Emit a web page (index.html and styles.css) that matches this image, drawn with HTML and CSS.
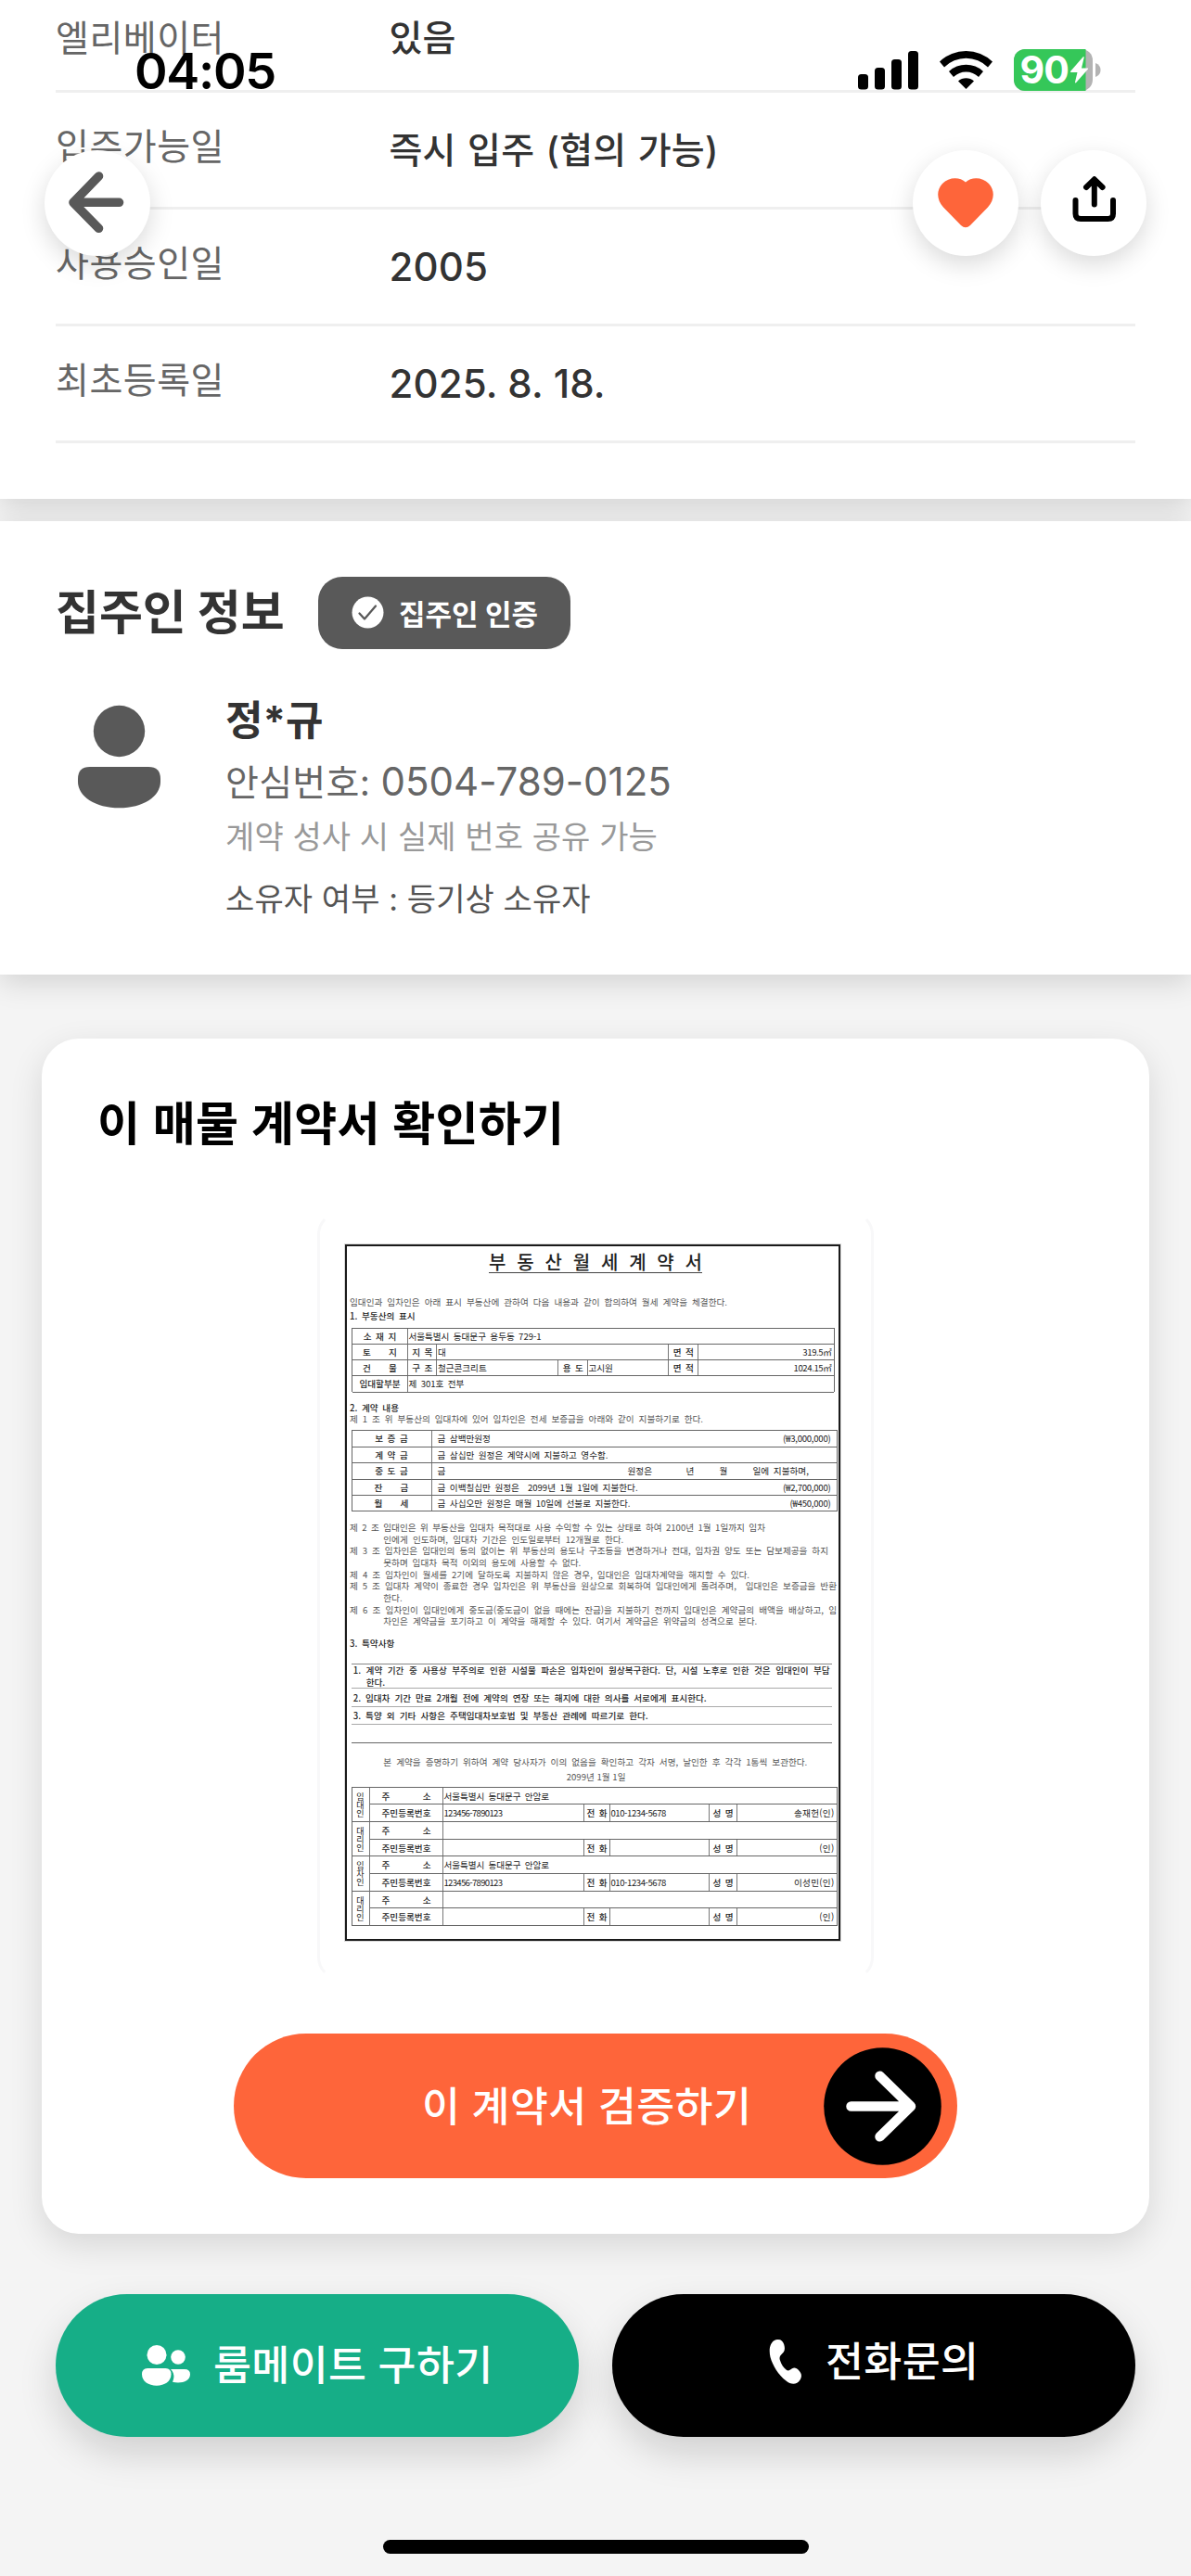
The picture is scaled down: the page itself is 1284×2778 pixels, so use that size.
FILE: index.html
```html
<!DOCTYPE html>
<html lang="ko">
<head>
<meta charset="utf-8">
<title>매물 상세</title>
<link rel="stylesheet" href="styles.css">
</head>
<body>
<div class="screen">
  <div class="status">
    <span class="time">04:05</span>
    <svg class="status-icons" width="264" height="48" viewBox="924 52 264 48">
      <g fill="#000">
        <rect x="925" y="80" width="11" height="16.500" rx="3.500"/>
        <rect x="943" y="73" width="11" height="23.500" rx="3.500"/>
        <rect x="961" y="64" width="11" height="32.500" rx="3.500"/>
        <rect x="979" y="55" width="11" height="41.500" rx="3.500"/>
        <path d="M1013 66.500a41 41 0 0 1 57 0l-5 6a33.500 33.500 0 0 0-47 0z"/>
        <path d="M1023 77a27 27 0 0 1 37 0l-5 6a19.500 19.500 0 0 0-27 0z"/>
        <path d="M1033 87.500a13 13 0 0 1 17 0l-8.500 8.500z"/>
      </g>
      <path d="M1105 53h61a12 12 0 0 1 12 12v21a12 12 0 0 1-12 12h-61a12 12 0 0 1-12-12v-21a12 12 0 0 1 12-12z" fill="#b3b3b3"/>
      <path d="M1105 53h65.500v45h-65.500a12 12 0 0 1-12-12v-21a12 12 0 0 1 12-12z" fill="#35c759"/>
      <path d="M1181 68q5.500 2 5.500 7.500t-5.500 7.500z" fill="#b3b3b3"/>
      <path d="M1167.500 61.500l-13.500 15.500q-.5 1 1 1h6.500l-2.500 10.500q0 1.500 1.200.5l12.800-14.500q.8-1-.6-1h-6.400l2.700-11.500q0-1.500-1.200-.5z" fill="#fff"/>
      <text class="battery-text" x="1099.500" y="90">90</text>
    </svg>
  </div>

  <button class="round back" aria-label="뒤로">
    <svg width="114" height="114" viewBox="48 162 114 114" fill="none" stroke="#595959" stroke-width="9.600" stroke-linecap="round" stroke-linejoin="round"><path d="M128.500 218.300H79M106.500 190L79 218.300l27.500 28"/></svg>
  </button>
  <div class="round-group">
    <button class="round" aria-label="찜">
      <svg width="114" height="114" viewBox="984 162 114 114"><path d="M1041 196.500C1047 190.500 1059 190.500 1066 198C1073 205.500 1072 216 1065 223.500L1046 243Q1041 247.500 1036 243L1017 223.500C1010 216 1009 205.500 1016 198C1023 190.500 1035 190.500 1041 196.500Z" fill="#fe653a"/></svg>
    </button>
    <button class="round" aria-label="공유">
      <svg width="114" height="114" viewBox="1122 162 114 114" fill="none" stroke="#000" stroke-width="6" stroke-linecap="round" stroke-linejoin="round"><path d="M1179.800 220.500V194M1171 202l8.800-8.700 8.800 8.700M1159.500 216v14.500q0 5.500 5.500 5.500h29.500q5.500 0 5.500-5.500V216"/></svg>
    </button>
  </div>

  <section class="panel facts">
    <div class="fact fact-first"><span class="key">엘리베이터</span><span class="val">있음</span></div>
    <div class="fact"><span class="key">입주가능일</span><span class="val">즉시 입주 (협의 가능)</span></div>
    <div class="fact"><span class="key">사용승인일</span><span class="val num">2005</span></div>
    <div class="fact"><span class="key">최초등록일</span><span class="val num">2025. 8. 18.</span></div>
  </section>

  <section class="panel owner">
    <div class="owner-head">
      <h2>집주인 정보</h2>
      <span class="badge">
        <svg width="35" height="35" viewBox="0 0 35 35"><circle cx="17.500" cy="17.500" r="17" fill="#fff"/><path d="M8.500 18.500l5.500 6 12-14" fill="none" stroke="#595959" stroke-width="2.300" stroke-linecap="round" stroke-linejoin="round"/></svg>
        <span>집주인 인증</span>
      </span>
    </div>
    <div class="owner-body">
      <svg width="183" height="130" viewBox="60 743 183 130" fill="#595959"><circle cx="128.500" cy="788.500" r="27.700"/><path d="M84 840q0-13 13-13h63q13 0 13 13v3c0 16-19 28.300-44.500 28.300S84 859 84 843z"/></svg>
      <div class="owner-lines">
        <div class="name">정*규</div>
        <div class="phone">안심번호: <span class="digits">0504-789-0125</span></div>
        <div class="note">계약 성사 시 실제 번호 공유 가능</div>
        <div class="relation">소유자 여부 : 등기상 소유자</div>
      </div>
    </div>
  </section>

  <section class="card">
    <h2>이 매물 계약서 확인하기</h2>
    <div class="paper">
      <div class="doc">
        <div class="doc-title">부 동 산 월 세 계 약 서</div>
        <p class="ln intro">임대인과 임차인은 아래 표시 부동산에 관하여 다음 내용과 같이 합의하여 월세 계약을 체결한다.</p>
        <p class="ln strong">1. 부동산의 표시</p>

        <div class="grid t1">
          <div class="tr"><b class="c1">소 재 지</b><span>서울특별시 동대문구 용두동 729-1</span></div>
          <div class="tr"><b class="c1">토&emsp;&emsp;지</b><b class="c2">지 목</b><span>대</span><b class="c2">면 적</b><span class="area">319.5㎡</span></div>
          <div class="tr"><b class="c1">건&emsp;&emsp;물</b><b class="c2">구 조</b><span class="struct">철근콘크리트</span><b class="c2">용 도</b><span>고시원</span><b class="c2">면 적</b><span class="area">1024.15㎡</span></div>
          <div class="tr"><b class="c1">임대할부분</b><span>제 301호 전부</span></div>
        </div>

        <p class="ln strong head2">2. 계약 내용</p>
        <p class="ln art1">제 1 조 위 부동산의 임대차에 있어 임차인은 전세 보증금을 아래와 같이 지불하기로 한다.</p>

        <div class="grid t2">
          <div class="tr"><b>보 증 금</b><span>금 삼백만원정</span><em>(₩3,000,000)</em></div>
          <div class="tr"><b>계 약 금</b><span>금 삼십만 원정은 계약시에 지불하고 영수함.</span></div>
          <div class="tr"><b>중 도 금</b><span class="blank"><i>금</i><i>원정은</i><i>년</i><i>월</i><i>일에 지불하며,</i></span></div>
          <div class="tr"><b>잔&emsp;&emsp;금</b><span>금 이백칠십만 원정은 &nbsp;2099년 1월 1일에 지불한다.</span><em>(₩2,700,000)</em></div>
          <div class="tr"><b>월&emsp;&emsp;세</b><span>금 사십오만 원정은 매월 10일에 선불로 지불한다.</span><em>(₩450,000)</em></div>
        </div>

        <div class="articles">
          <p class="ln a1">제 2 조 임대인은 위 부동산을 임대차 목적대로 사용 수익할 수 있는 상태로 하여 2100년 1월 1일까지 임차</p>
          <p class="ln sub a2">인에게 인도하며, 임대차 기간은 인도일로부터 12개월로 한다.</p>
          <p class="ln a3">제 3 조 임차인은 임대인의 동의 없이는 위 부동산의 용도나 구조등을 변경하거나 전대, 임차권 양도 또는 담보제공을 하지</p>
          <p class="ln sub a4">못하며 임대차 목적 이외의 용도에 사용할 수 없다.</p>
          <p class="ln a5">제 4 조 임차인이 월세를 2기에 달하도록 지불하지 않은 경우, 임대인은 임대차계약을 해지할 수 있다.</p>
          <p class="ln a6">제 5 조 임대차 계약이 종료한 경우 임차인은 위 부동산을 원상으로 회복하여 임대인에게 돌려주며, &nbsp;임대인은 보증금을 반환</p>
          <p class="ln sub a7">한다.</p>
          <p class="ln a6">제 6 조 임차인이 임대인에게 중도금(중도금이 없을 때에는 잔금)을 지불하기 전까지 임대인은 계약금의 배액을 배상하고, 임</p>
          <p class="ln sub a9">차인은 계약금을 포기하고 이 계약을 해제할 수 있다. 여기서 계약금은 위약금의 성격으로 본다.</p>
        </div>

        <p class="ln strong head3">3. 특약사항</p>
        <div class="terms">
          <div class="two"><p class="ln s1">1. 계약 기간 중 사용상 부주의로 인한 시설물 파손은 임차인이 원상복구한다. 단, 시설 노후로 인한 것은 임대인이 부담</p><p class="ln s1b">한다.</p></div>
          <div><p class="ln s2">2. 임대차 기간 만료 2개월 전에 계약의 연장 또는 해지에 대한 의사를 서로에게 표시한다.</p></div>
          <div><p class="ln s3">3. 특양 외 기타 사항은 주택임대차보호법 및 부동산 관례에 따르기로 한다.</p></div>
          <div></div>
        </div>

        <p class="ln closing">본 계약을 증명하기 위하여 계약 당사자가 이의 없음을 확인하고 각자 서명, 날인한 후 각각 1통씩 보관한다.</p>
        <p class="ln date">2099년 1월 1일</p>

        <div class="grid t3">
          <div class="party"><div class="role">임<br>대<br>인</div><div class="rows">
            <div class="tr"><b><u>주 소</u></b><span>서울특별시 동대문구 안암로</span></div>
            <div class="tr"><b><u>주민등록번호</u></b><span class="rid">123456-7890123</span><b class="tel">전 화</b><span class="telv">010-1234-5678</span><b class="nm">성 명</b><em>송재헌(인)</em></div>
          </div></div>
          <div class="party"><div class="role">대<br>리<br>인</div><div class="rows">
            <div class="tr"><b><u>주 소</u></b><span></span></div>
            <div class="tr"><b><u>주민등록번호</u></b><span class="rid"></span><b class="tel">전 화</b><span class="telv"></span><b class="nm">성 명</b><em>(인)</em></div>
          </div></div>
          <div class="party"><div class="role">임<br>차<br>인</div><div class="rows">
            <div class="tr"><b><u>주 소</u></b><span>서울특별시 동대문구 안암로</span></div>
            <div class="tr"><b><u>주민등록번호</u></b><span class="rid">123456-7890123</span><b class="tel">전 화</b><span class="telv">010-1234-5678</span><b class="nm">성 명</b><em>이성민(인)</em></div>
          </div></div>
          <div class="party"><div class="role">대<br>리<br>인</div><div class="rows">
            <div class="tr"><b><u>주 소</u></b><span></span></div>
            <div class="tr"><b><u>주민등록번호</u></b><span class="rid"></span><b class="tel">전 화</b><span class="telv"></span><b class="nm">성 명</b><em>(인)</em></div>
          </div></div>
        </div>
      </div>
    </div>
    <button class="verify">
      <span>이 계약서 검증하기</span>
      <svg width="127" height="127" viewBox="888.500 2206.800 127 127"><circle cx="952" cy="2270.300" r="63.300" fill="#000"/><path d="M918 2270.300h63.500M949 2237.500l33.500 32.800-33.500 32.800" fill="none" stroke="#fff" stroke-width="10.500" stroke-linecap="round" stroke-linejoin="round"/></svg>
    </button>
  </section>

  <div class="actions">
    <button class="mate">
      <svg width="54" height="46" viewBox="152 2528 54 46" fill="#fff"><circle cx="169" cy="2539.500" r="10.500"/><circle cx="192" cy="2542" r="7.800"/><path d="M153 2560.500q0-6.500 6-6.500h19.500q6 0 6 6.500c0 7.500-7 12.200-15.700 12.200S153 2568 153 2560.500z"/><path d="M184 2555h15q6 0 6 5.500c0 6-6 9-13 9q-3 0-6-.8 2.300-5 .8-9.500-.8-2.500-2.800-4.200z"/></svg>
      <span>룸메이트 구하기</span>
    </button>
    <button class="call">
      <svg width="36" height="50" viewBox="829 2521 36 50"><path d="M836.500 2522.300C841 2521 844 2523 845.300 2527.500C846.800 2533 845.500 2535.500 842.500 2538C840.500 2540 840 2541.500 841 2544.500C842.300 2549 844.500 2552 847.500 2554.500C850 2556.500 851.300 2555 853.500 2553.500C856 2552 858 2552.300 860 2554C865 2558.500 864.500 2562 862.500 2565.500C859 2571 853 2571 847.500 2566.500C839 2560 833 2550 830.500 2541C828.800 2534 829.500 2524.500 836.500 2522.300Z" fill="#fff"/></svg>
      <span>전화문의</span>
    </button>
  </div>
  <div class="home-bar"></div>
</div>
</body>
</html>
```

FILE: styles.css
```css
* { box-sizing: border-box; }
body { margin: 0; background: #f4f4f4; }
h2, p { margin: 0; }
button { border: 0; padding: 0; font: inherit; color: inherit; }
svg { display: block; flex: none; }

.screen {
  position: relative;
  width: 1284px;
  height: 2778px;
  overflow: hidden;
  background: #f4f4f4;
  font-family: "Inter", "Noto Sans CJK KR", sans-serif;
  color: #333;
}

/* status bar and floating buttons lie over the scrolled page */
.status {
  position: absolute;
  z-index: 3;
  top: 52px;
  left: 145px;
  width: 1043px;
  display: flex;
  justify-content: space-between;
  align-items: flex-start;
}
.status-icons { overflow: visible; }
.time { font-size: 54px; font-weight: 600; line-height: 50px; color: #000; letter-spacing: -1.3px; }
.battery-text { font-size: 41px; font-weight: 700; fill: #fff; letter-spacing: -1px; }

.round {
  width: 114px;
  height: 114px;
  border-radius: 50%;
  background: #fff;
  box-shadow: 0 9px 27px rgba(0, 0, 0, .15);
}
.back { position: absolute; z-index: 2; top: 162px; left: 48px; }
.round-group { position: absolute; z-index: 2; top: 162px; left: 984px; display: flex; gap: 24px; }

.panel { background: #fff; padding: 0 60px; box-shadow: 0 8px 30px rgba(0, 0, 0, .14); }

.facts { height: 538px; }
.fact {
  height: 126px;
  border-bottom: 3px solid #efefef;
  display: flex;
  align-items: center;
}
.key { width: 359.500px; padding-bottom: 8px; font-size: 39px; line-height: 60px; color: #666; letter-spacing: .5px; }
.val { font-size: 39px; font-weight: 500; line-height: 60px; color: #333; letter-spacing: .2px; word-spacing: 1.800px; }
.num { font-size: 42px; letter-spacing: .1px; word-spacing: 0; }
.fact-first { height: 100px; align-items: flex-start; }
.fact-first .key, .fact-first .val { line-height: 82px; padding: 0; }

.owner { margin-top: 24px; height: 489px; padding-top: 60px; }
.owner-head { display: flex; align-items: center; gap: 36px; height: 78px; }
.owner-head h2 { font-size: 51px; font-weight: 700; line-height: 78px; width: 247px; white-space: nowrap; }
.badge {
  display: flex;
  align-items: center;
  gap: 16px;
  width: 272px;
  height: 78px;
  padding: 0 0 2px 36px;
  border-radius: 26px;
  background: #595959;
  color: #fff;
  font-size: 31px;
  font-weight: 700;
  white-space: nowrap;
}
.owner-body { display: flex; margin-top: 43px; }
.name { font-size: 44px; font-weight: 700; line-height: 68px; margin-bottom: -2px; }
.phone { font-size: 39px; line-height: 67px; margin-bottom: -1px; color: #666; letter-spacing: .3px; }
.digits { font-size: 42px; letter-spacing: 0; }
.note { font-size: 34px; line-height: 54px; color: #999; letter-spacing: .1px; }
.relation { margin-top: 13px; font-size: 34px; line-height: 54px; color: #555; letter-spacing: .1px; }

.card {
  margin: 69px 45px 0;
  height: 1289px;
  padding-top: 56px;
  border-radius: 40px;
  background: #fff;
  box-shadow: 0 12px 36px rgba(0, 0, 0, .12);
  color: #000;
}
.card h2 { margin-left: 60px; font-size: 50px; font-weight: 700; line-height: 72px; letter-spacing: .25px; word-spacing: 1.500px; }

.paper {
  width: 600px;
  height: 828px;
  margin: 59px auto 0;
  padding: 35px 33px 0 27px;
  border: 3px solid #f8f8f9;
  border-top-color: #fff;
  border-bottom-color: #fff;
  border-radius: 24px;
}
.doc {
  width: 534px;
  height: 751px;
  margin-top: -3px;
  border: 2px solid #1a1a1a;
  outline: 1px solid rgba(0, 0, 0, .15);
  padding: 7px 0 0 3px;
  font-family: "Noto Sans CJK KR", sans-serif;
  font-size: 9.6px;
  color: #444;
}
.doc-title {
  width: 230px;
  height: 22px;
  margin-left: 150px;
  border-bottom: 1px solid #444;
  font-size: 20px;
  line-height: 19px;
  font-weight: 500;
  color: #222;
  text-align-last: justify;
  white-space: nowrap;
}
.ln { height: 12.67px; line-height: 12px; white-space: nowrap; text-align-last: justify; color: #555; }
.strong { font-weight: 500; color: #222; text-align-last: left; word-spacing: 2px; }
.intro { width: 407px; margin-top: 24.700px; margin-bottom: 2.300px; }

.grid { margin-left: 1.500px; border: 1px solid #666; border-bottom: 0; color: #222; }
.tr { display: flex; border-bottom: 1px solid #666; white-space: nowrap; word-spacing: 1.800px; }
.tr > * { display: flex; align-items: center; line-height: 12px; }
.tr b { justify-content: center; font-weight: 500; }
.tr em { font-style: normal; margin-left: auto; letter-spacing: 0; }
.t1 { width: 521px; height: 69.500px; margin-top: 6.500px; }
.t1 .tr { height: 17.200px; }
.t1 .tr > * { border-right: 1px solid #777; padding-left: 1px; }
.t1 .tr > span:last-child { border-right: 0; }
.t1 .tr span { flex: 1; letter-spacing: -.05px; }
.t1 .c1 { width: 60px; }
.t1 .c2 { width: 31.500px; }
.t1 .tr .struct { flex: none; width: 131px; }
.t1 .tr .area { flex: none; width: 146px; justify-content: flex-end; padding-right: 2px; letter-spacing: -.4px; }

.head2 { margin-top: 10.500px; height: 12px; }
.art1 { width: 381px; }
.t2 { width: 524px; margin-top: 5.800px; }
.t2 .tr { height: 17.450px; }
.t2 b { width: 86px; border-right: 1px solid #777; margin-right: 6px; }
.t2 em { padding-right: 6px; letter-spacing: -.25px; }
.t2 .blank { flex: 1; word-spacing: 2px; }
.t2 i { font-style: normal; }
.t2 i:nth-child(1) { width: 205px; }
.t2 i:nth-child(2) { width: 63px; }
.t2 i:nth-child(3) { width: 36px; }
.t2 i:nth-child(4) { width: 36px; }

.articles { margin-top: 10.700px; }
.sub { margin-left: 36.300px; }
.a1 { width: 448px; }
.a2 { width: 259px; }
.a3 { width: 516px; }
.a4 { width: 213px; }
.a5 { width: 431px; }
.a6 { width: 525px; }
.a7 { width: 22px; }
.a9 { width: 403px; }

.head3 { margin-top: 11.300px; }
.terms { width: 518px; margin: 15px 0 0 2px; border-top: 1px solid #888; }
.terms > div { height: 19.670px; border-bottom: 1px solid #aaa; padding: 3.700px 0 0 1.700px; }
.terms > div:last-child { border-bottom-color: #666; }
.terms > .two { height: 26px; padding-top: 0; }
.terms .ln { color: #222; font-weight: 500; }
.s1 { width: 514px; }
.s1b { width: 22px; margin-left: 14px; }
.s2 { width: 381px; }
.s3 { width: 318px; }

.closing { width: 457px; margin: 14.500px 0 2.500px 36.300px; }
.date { width: 63px; margin-left: 233.700px; }
.t3 { width: 524px; margin-top: 4.500px; }
.party { display: flex; height: 37.350px; }
.role {
  width: 19px;
  border-right: 1px solid #777;
  border-bottom: 1px solid #666;
  font-size: 9px;
  line-height: 9px;
  padding-top: 5px;
  text-align: center;
}
.rows { flex: 1; }
.t3 .tr { height: 18.670px; }
.t3 .tr > * { border-right: 1px solid #777; padding-left: 1px; }
.t3 .tr > :last-child { border-right: 0; }
.t3 .tr b { width: 79px; }
.t3 u { width: 53px; text-decoration: none; text-align-last: justify; }
.t3 span { letter-spacing: -.1px; }
.t3 .rid { width: 152px; letter-spacing: -.7px; }
.t3 .tr .tel { width: 28px; }
.t3 .telv { width: 107px; letter-spacing: -.45px; }
.t3 .tr .nm { width: 30px; }
.t3 em { padding-right: 2px; letter-spacing: .3px; }

.verify {
  position: relative;
  display: flex;
  align-items: center;
  width: 780px;
  height: 156px;
  margin: 58px auto 0;
  padding: 0 17px 0 203px;
  justify-content: space-between;
  border-radius: 78px;
  background: #fe653a;
  color: #fff;
  font-size: 44.500px;
  font-weight: 500;
  letter-spacing: .4px;
}
.verify span { padding-bottom: 5px; }

.actions { display: flex; gap: 36px; margin-top: 65px; padding: 0 60px; }
.actions button {
  flex: none;
  width: 564px;
  height: 154px;
  display: flex;
  align-items: center;
  border-radius: 77px;
  color: #fff;
  font-size: 44.500px;
  font-weight: 500;
  line-height: 60px;
  letter-spacing: .4px;
  box-shadow: 0 18px 40px rgba(0, 0, 0, .15);
}
.mate { background: #16ae87; padding-left: 92px; gap: 24px; }
.call { background: #000; padding: 0 0 9px 169px; gap: 25px; }
.actions .mate { padding-left: 92px; }

.home-bar {
  position: absolute;
  left: 413px;
  bottom: 24px;
  width: 459px;
  height: 15px;
  border-radius: 8px;
  background: #000;
}
```
